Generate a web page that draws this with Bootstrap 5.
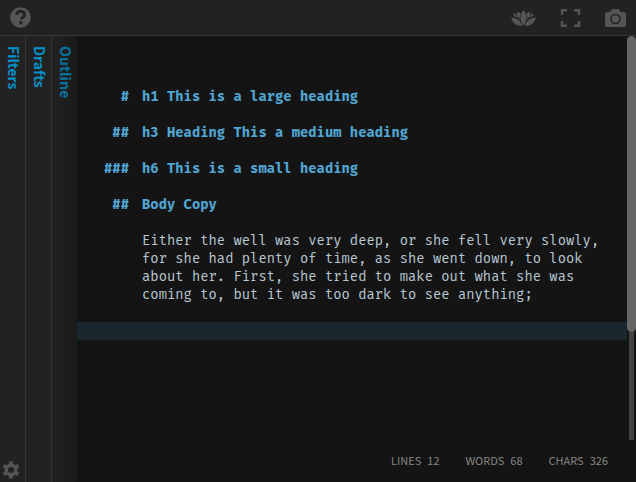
<!DOCTYPE html>
<html lang="en">
<head>
<meta charset="utf-8">
<meta name="viewport" content="width=device-width, initial-scale=1">
<title>Editor</title>
<link href="https://cdn.jsdelivr.net/npm/bootstrap@5.3.0/dist/css/bootstrap.min.css" rel="stylesheet">
<style>
body{background:#141414;color:#b9c8d3;font-family:"Noto Sans CJK SC",sans-serif}
svg{display:block;fill:#555}
.topbar{height:36px;background:#222;border-bottom:1px solid #363636;padding:0 10px}
.topbar .tools{gap:23px}
.rail{width:77px;background:#222}
.rail-tab{width:26px;border-right:1px solid #363636;padding-top:10px}
.rail-tab:last-child{width:25px;border-right:0;background:linear-gradient(90deg,#222,#1a1a1a)}
.rail-tab span{writing-mode:vertical-rl;text-orientation:sideways;font-size:14px;line-height:27px;font-weight:700;color:#0590c7}
.rail-tab:first-child span{margin-left:1px;line-height:25px;align-self:flex-start}
.rail-tab:last-child span{color:#08729c;letter-spacing:.15px}
.rail-tab svg{margin:0 0 3px 2px}
.editor{padding-top:52px;font:13.82px/18px "Fira Mono","DejaVu Sans Mono",monospace;letter-spacing:.025px;white-space:pre}
.line{height:18px}
.hash{width:52px;margin-right:13px;text-align:right;flex:none}
.heading{color:#51a5d2;font-weight:700}
.active-line{background:#1a272c}
.pad{padding-left:65px}
.scroller{width:9px}
.thumb{height:296px;background:#666;border-radius:5px}
.track{width:5px;height:108px;background:#444}
.stats{font-size:11px;line-height:16px;color:#858585;gap:26px;padding:0 28px 14px 0}
.stats .num{margin-left:6px}
</style>
<script src="https://cdn.jsdelivr.net/npm/bootstrap@5.3.0/dist/js/bootstrap.bundle.min.js"></script>
</head>
<body class="vh-100 overflow-hidden d-flex flex-column">
<header class="topbar d-flex align-items-center justify-content-between flex-shrink-0">
<svg width="21" height="21" viewBox="0 0 21 21"><circle cx="10.5" cy="10.5" r="10.3"/><path d="M6.6 7.8C6.8 5.4 8.3 4.3 10.5 4.3c2.300 0 4.100 1.200 4.100 3.300 0 2.700-3.300 2.800-3.300 5" fill="none" stroke="#222" stroke-width="2.700"/><circle cx="10.800" cy="15.700" r="1.700" fill="#222"/></svg>
<div class="tools d-flex align-items-center">
<svg width="27" height="20" viewBox="0 0 27 20"><path d="M14.500 2.300C18.600 7 18.600 12.500 14.500 17.400 10.400 12.500 10.400 7 14.500 2.300zM7.800 4Q10.500 4 11.800 5.600 10.300 8 10.700 11.400L9.500 10Q7.500 8 7.800 4zM21.200 4Q18.500 4 17.200 5.600 18.700 8 18.300 11.400L19.500 10Q21.500 8 21.200 4zM4.500 6Q6 5.700 7 6.100 7.300 8 8.300 9.800L5.500 8.500Q4.700 7.500 4.500 6zM24.500 6Q23 5.700 22 6.100 21.700 8 20.700 9.800L23.500 8.500Q24.300 7.500 24.500 6zM2 9.400Q11 10 13.300 17.500 5 19 2 9.400zM27 9.400Q18 10 15.700 17.500 24 19 27 9.400z"/></svg>
<svg width="22" height="20" viewBox="0 0 22 20"><path d="M3 7V2.200h5M15 2.200H20V7M20 13v4.800h-5M8 17.800H3V13" fill="none" stroke="#555" stroke-width="2.400"/></svg>
<svg width="22" height="20" viewBox="0 0 22 20"><path d="M3.500 4H6.600l1.200-2.500Q8.100 1 8.800 1h5.200q.700 0 1 .500L16.200 4h3.500Q22 4 22 6v11q0 2-2 2H3q-2 0-2-2V6q0-2 2.500-2z"/><circle cx="11.500" cy="11" r="4.500" fill="none" stroke="#222" stroke-width="1.500"/></svg>
</div>
</header>
<div class="d-flex flex-grow-1">
<nav class="rail d-flex flex-shrink-0">
<div class="rail-tab d-flex flex-column justify-content-between"><span>Filters</span><svg width="18" height="18" viewBox="0 0 18 18"><path fill="none" stroke="#555" stroke-width="4" d="M9 .500v3M9 14.500v3M1.640 4.750l2.600 1.500M13.760 11.750l2.600 1.500M1.640 13.250l2.600-1.500M13.760 6.250l2.600-1.500"/><circle cx="9" cy="9" r="4.700" fill="none" stroke="#555" stroke-width="3.400"/></svg></div>
<div class="rail-tab"><span>Drafts</span></div>
<div class="rail-tab"><span>Outline</span></div>
</nav>
<main class="d-flex flex-column justify-content-between flex-grow-1">
<div class="d-flex">
<div class="editor flex-grow-1"><div class="line heading d-flex"><span class="hash">#</span><span>h1 This is a large heading</span></div><div class="line"></div><div class="line heading d-flex"><span class="hash">##</span><span>h3 Heading This a medium heading</span></div><div class="line"></div><div class="line heading d-flex"><span class="hash">###</span><span>h6 This is a small heading</span></div><div class="line"></div><div class="line heading d-flex"><span class="hash">##</span><span>Body Copy</span></div><div class="line"></div><div class="pad">Either the well was very deep, or she fell very slowly,
for she had plenty of time, as she went down, to look
about her. First, she tried to make out what she was
coming to, but it was too dark to see anything;</div><div class="line"></div><div class="line active-line"></div></div>
<div class="scroller d-flex flex-column align-items-center"><div class="thumb w-100"></div><div class="track"></div></div>
</div>
<footer class="stats d-flex justify-content-end"><div>LINES<span class="num">12</span></div><div>WORDS<span class="num">68</span></div><div>CHARS<span class="num">326</span></div></footer>
</main>
</div>
</body>
</html>
